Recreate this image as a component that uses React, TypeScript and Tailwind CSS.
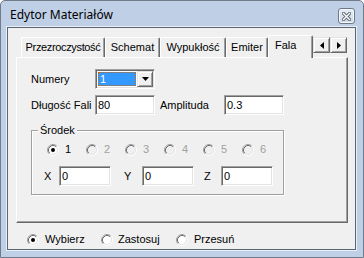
import React from "react";

function Radio({ checked, disabled }: { checked?: boolean; disabled?: boolean }) {
  return (
    <svg width="12" height="12" viewBox="0 0 12 12" className="shrink-0 block">
      <circle cx="6" cy="6" r="4.2" fill={disabled ? "#f0f0f0" : "#ffffff"} />
      <path d="M2.11 9.89 A5.5 5.5 0 0 1 9.89 2.11" fill="none" stroke="#a0a0a0" strokeWidth="1" />
      <path d="M9.89 2.11 A5.5 5.5 0 0 1 2.11 9.89" fill="none" stroke="#ffffff" strokeWidth="1" />
      <path d="M2.82 9.18 A4.5 4.5 0 0 1 9.18 2.82" fill="none" stroke="#696969" strokeWidth="1" />
      <path d="M9.18 2.82 A4.5 4.5 0 0 1 2.82 9.18" fill="none" stroke="#e3e3e3" strokeWidth="1" />
      {checked && <circle cx="6" cy="6" r="2" fill="#000000" />}
    </svg>
  );
}

function Edit({ value, className }: { value: string; className: string }) {
  return (
    <div
      className={`${className} h-[20px] bg-white border border-t-[#a0a0a0] border-l-[#a0a0a0] border-r-white border-b-white shadow-[inset_1px_1px_0_#696969,inset_-1px_-1px_0_#e3e3e3] flex items-center pl-[2px] text-[11px] text-black leading-none`}
    >
      {value}
    </div>
  );
}

function Tab({ label, className }: { label: string; className: string }) {
  return (
    <div
      className={`${className} mt-[2px] h-[20px] border-t border-l border-white border-r border-r-[#696969] shadow-[inset_-1px_0_0_#a0a0a0] rounded-t-[2px] flex items-center justify-center text-[11px] text-black whitespace-nowrap overflow-hidden`}
    >
      {label}
    </div>
  );
}

function ArrowBtn({ dir }: { dir: "l" | "r" }) {
  return (
    <div className="w-[17px] h-[16px] bg-[#f0f0f0] border border-t-[#e3e3e3] border-l-[#e3e3e3] border-r-[#696969] border-b-[#696969] shadow-[inset_1px_1px_0_#ffffff,inset_-1px_-1px_0_#a0a0a0] flex items-center justify-center">
      <svg width="4" height="7" viewBox="0 0 4 7" className="block">
        {dir === "l" ? <path d="M4 0 L0 3.5 L4 7 Z" fill="#000" /> : <path d="M0 0 L4 3.5 L0 7 Z" fill="#000" />}
      </svg>
    </div>
  );
}

export default function App() {
  return (
    <div
      className="w-[364px] h-[258px] bg-[#bfcfe5] border border-[#6f7b8a] rounded-t-[5px] flex flex-col overflow-hidden"
      style={{ fontFamily: '"Liberation Sans", Arial, sans-serif' }}
    >
      {/* Title bar */}
      <div className="h-[26px] flex items-start justify-between pl-[9px] pr-[8px] shrink-0">
        <div
          className="mt-[6px] text-[12px] leading-[16px] text-black"
          style={{ fontFamily: '"Noto Sans", "Open Sans", sans-serif' }}
        >
          Edytor Materiałów
        </div>
        <div className="mt-[7px] w-[17px] h-[16px] rounded-[3px] border border-[#6d7a8c] bg-gradient-to-b from-[#e9eef5] to-[#cdd7e4] shadow-[inset_0_0_0_1px_#f6f8fb] flex items-center justify-center">
          <svg width="9" height="9" viewBox="0 0 9 9" className="block">
            <path d="M1.5 1.5 L7.5 7.5 M7.5 1.5 L1.5 7.5" stroke="#5c6878" strokeWidth="3.2" strokeLinecap="square" />
            <path d="M1.5 1.5 L7.5 7.5 M7.5 1.5 L1.5 7.5" stroke="#ffffff" strokeWidth="1.4" strokeLinecap="square" />
          </svg>
        </div>
      </div>

      {/* Client area */}
      <div className="ml-[6px] mr-[7px] mb-[7px] flex-1 border border-[#5b6675] shadow-[0_0_0_1px_#e9eff7]">
        <div className="h-full bg-[#f0f0f0] flex flex-col pl-[8px] pt-[7px]">
          {/* Tab strip */}
          <div className="w-[332px] h-[22px] flex items-start pl-[5px]">
            <Tab label="Przezroczystość" className="w-[84px] tracking-[-0.35px]" />
            <Tab label="Schemat" className="w-[55px]" />
            <Tab label="Wypukłość" className="w-[66px]" />
            <Tab label="Emiter" className="w-[42px]" />
            <div className="relative z-10 w-[45px] h-[23px] bg-[#f0f0f0] border-t border-l border-white border-r border-r-[#696969] shadow-[inset_-1px_0_0_#a0a0a0] rounded-t-[2px] flex items-start pt-[2px] pl-[6px] text-[11px] leading-[14px] text-black">
              Fala
            </div>
            <div className="mt-[2px] flex">
              <ArrowBtn dir="l" />
              <ArrowBtn dir="r" />
            </div>
          </div>

          {/* Tab panel */}
          <div className="w-[332px] h-[166px] border border-t-white border-l-white border-r-[#696969] border-b-[#696969] shadow-[inset_-1px_-1px_0_#a0a0a0] pl-[14px] pt-[11px] text-[11px] text-black">
            <div className="flex items-center h-[20px]">
              <div className="w-[64px]">Numery</div>
              <div className="w-[60px] h-[20px] bg-white border border-t-[#a0a0a0] border-l-[#a0a0a0] border-r-white border-b-white shadow-[inset_1px_1px_0_#696969,inset_-1px_-1px_0_#e3e3e3] p-[1px] flex">
                <div className="flex-1 m-[1px] bg-[#3399ff] border border-dotted border-[#cc6600] text-white flex items-center pl-[1px] leading-none">
                  1
                </div>
                <div className="w-[16px] h-full bg-[#f0f0f0] border border-t-[#e3e3e3] border-l-[#e3e3e3] border-r-[#696969] border-b-[#696969] shadow-[inset_1px_1px_0_#ffffff,inset_-1px_-1px_0_#a0a0a0] flex items-center justify-center">
                  <svg width="7" height="4" viewBox="0 0 7 4" className="block">
                    <path d="M0 0 L7 0 L3.5 4 Z" fill="#000" />
                  </svg>
                </div>
              </div>
            </div>

            <div className="flex items-center h-[20px] mt-[6px]">
              <div className="w-[64px]">Długość Fali</div>
              <Edit value="80" className="w-[60px]" />
              <div className="ml-[5px] w-[64px]">Amplituda</div>
              <Edit value="0.3" className="w-[60px]" />
            </div>

            <fieldset className="mt-[9px] w-[253px] h-[71px] border border-[#a0a0a0] shadow-[1px_1px_0_#ffffff,inset_1px_1px_0_#ffffff]">
              <legend className="ml-[6px] px-[2px] bg-[#f0f0f0] leading-[13px]">Środek</legend>
              <div className="flex items-center h-[13px] mt-[6px] pl-[15px]">
                {[1, 2, 3, 4, 5, 6].map((n) => (
                  <div key={n} className="w-[39px] flex items-center shrink-0">
                    <Radio checked={n === 1} disabled={n !== 1} />
                    <span className={n === 1 ? "ml-[6px] text-black" : "ml-[6px] text-[#a0a0a0]"}>{n}</span>
                  </div>
                ))}
              </div>
              <div className="flex items-center h-[20px] mt-[10px] pl-[12px]">
                <div className="w-[15px]">X</div>
                <Edit value="0" className="w-[52px]" />
                <div className="ml-[13px] w-[18px]">Y</div>
                <Edit value="0" className="w-[52px]" />
                <div className="ml-[10px] w-[17px]">Z</div>
                <Edit value="0" className="w-[52px]" />
              </div>
            </fieldset>
          </div>

          {/* Bottom radio row */}
          <div className="mt-[10px] h-[13px] flex items-center pl-[11px] text-[11px] text-black">
            <div className="flex items-center w-[74px]">
              <Radio checked />
              <span className="ml-[6px]">Wybierz</span>
            </div>
            <div className="flex items-center w-[75px]">
              <Radio />
              <span className="ml-[5px]">Zastosuj</span>
            </div>
            <div className="flex items-center">
              <Radio />
              <span className="ml-[6px]">Przesuń</span>
            </div>
          </div>
        </div>
      </div>
    </div>
  );
}
